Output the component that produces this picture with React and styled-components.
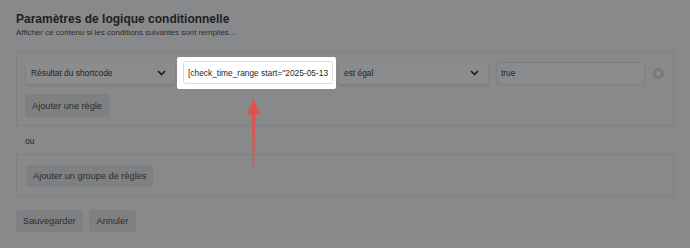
import React from 'react'
import styled, { createGlobalStyle } from 'styled-components'

const Global = createGlobalStyle`
  html, body { margin: 0; padding: 0; background: #88898b; }
  body { font-family: "Liberation Sans", Arial, sans-serif; }
`

const Page = styled.div`
  position: relative;
  width: 690px;
  height: 248px;
  box-sizing: border-box;
  padding: 12px 16px 0 16px;
  color: #262728;
`

const Title = styled.h2`
  margin: 0;
  font-size: 12px;
  line-height: 14px;
  font-weight: 700;
  color: #1e1f20;
`

const Sub = styled.p`
  margin: 2px 0 0 0;
  font-size: 8px;
  line-height: 10px;
  color: #2c2d2e;
`

const Group = styled.div`
  margin-top: ${p => p.top || 0}px;
  width: 658px;
  box-sizing: border-box;
  border: 1px solid #7f8082;
  padding: ${p => p.pad};
`

const Row = styled.div`
  display: flex;
  align-items: center;
`

const Select = styled.div`
  display: flex;
  align-items: center;
  justify-content: space-between;
  box-sizing: border-box;
  width: 151px;
  height: 23px;
  margin-left: ${p => p.ml || 0}px;
  padding: 0 9px 0 5px;
  background: #8b8c8e;
  border: 1px solid #828385;
  border-radius: 3px;
  box-shadow: 0 1px 1px rgba(0, 0, 0, 0.08);
  font-size: 8.4px;
  color: #232425;
`

const Highlight = styled.div`
  margin-left: 1px;
  padding: 4px 3px 5px 6px;
  background: #ffffff;
  border-radius: 2px;
`

const Field = styled.input`
  box-sizing: border-box;
  width: ${p => p.w}px;
  height: 23px;
  margin-left: ${p => p.ml || 0}px;
  padding: 0 4px;
  font-family: "Liberation Sans", Arial, sans-serif;
  font-size: 8.4px;
  color: ${p => (p.dim ? '#232425' : '#1f1f1f')};
  background: ${p => (p.dim ? '#8a8b8d' : '#ffffff')};
  border: 1px solid ${p => (p.dim ? '#7e7f81' : '#dcdcdc')};
  border-radius: 3px;
  outline: none;
`

const Remove = styled.svg`
  margin-left: 8px;
  flex: none;
`

const Button = styled.button`
  display: block;
  height: ${p => p.h || 22}px;
  margin-top: ${p => p.mt || 0}px;
  padding: 0 ${p => p.px || 7}px;
  border: none;
  border-radius: 2px;
  background: #7f8082;
  color: #2c2d2e;
  font-family: "Liberation Sans", Arial, sans-serif;
  font-size: 9.2px;
`

const Or = styled.div`
  height: 28px;
  padding-left: 9px;
  line-height: 30px;
  font-size: 8.4px;
  color: #222324;
`

const Actions = styled.div`
  display: flex;
  gap: 6px;
  margin-top: 13px;
`

const Arrow = styled.svg`
  position: absolute;
  left: 244px;
  top: 96px;
`

const Chevron = () => (
  <svg width="9" height="6" viewBox="0 0 9 6">
    <path d="M1 1l3.5 3.5L8 1" fill="none" stroke="#1b1c1d" strokeWidth="1.6" />
  </svg>
)

export default function App() {
  return (
    <Page>
      <Global />
      <Title>Paramètres de logique conditionnelle</Title>
      <Sub>Afficher ce contenu si les conditions suivantes sont remplies...</Sub>
      <Group top={13} pad="5px 8px 8px 8px">
        <Row>
          <Select>
            <span>Résultat du shortcode</span>
            <Chevron />
          </Select>
          <Highlight>
            <Field w={150} readOnly value={'[check_time_range start="2025-05-13 08:00" end="2025-05-20 18:00"]'} />
          </Highlight>
          <Select ml={2}>
            <span>est égal</span>
            <Chevron />
          </Select>
          <Field dim w={149} ml={7} readOnly value="true" />
          <Remove width="11" height="11" viewBox="0 0 11 11">
            <circle cx="5.5" cy="5.5" r="5.5" fill="#797a7c" />
            <path d="M3.5 3.5l4 4M7.5 3.5l-4 4" stroke="#939496" strokeWidth="1.4" />
          </Remove>
        </Row>
        <Button h={23} mt={5} px={7}>Ajouter une règle</Button>
      </Group>
      <Or>ou</Or>
      <Group pad="10px 9px 9px 9px">
        <Button px={7}>Ajouter un groupe de règles</Button>
      </Group>
      <Actions>
        <Button>Sauvegarder</Button>
        <Button px={8}>Annuler</Button>
      </Actions>
      <Arrow width="20" height="74" viewBox="0 0 20 74">
        <path d="M9.5 2L16 18.5H11.2L10.2 71H8.8L7.8 18.5H3Z" fill="#e0524f" />
      </Arrow>
    </Page>
  )
}
